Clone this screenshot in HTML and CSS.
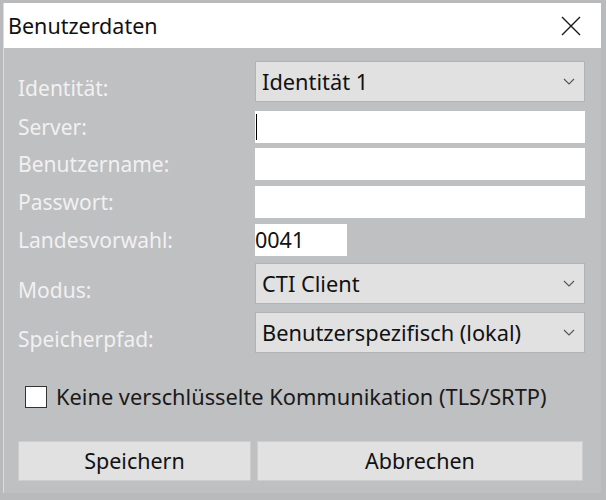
FILE: index.html
```html
<!DOCTYPE html>
<html lang="de">
<head>
<meta charset="utf-8">
<title>Benutzerdaten</title>
<link rel="stylesheet" href="styles.css">
</head>
<body>
<div class="window">
  <div class="titlebar">
    <span class="title">Benutzerdaten</span>
    <span class="close">
      <svg width="20" height="20" viewBox="0 0 20 20"><path d="M1 1 L19 19 M19 1 L1 19" stroke="#1a1a1a" stroke-width="1.4" fill="none"/></svg>
    </span>
  </div>
  <div class="content">
    <div class="row row-select first">
      <label class="label">Identität:</label>
      <div class="select"><span>Identität 1</span><svg class="chev" width="12" height="7" viewBox="0 0 12 7"><path d="M1 1 L6 6 L11 1" stroke="#555" stroke-width="1.1" fill="none"/></svg></div>
    </div>
    <div class="row row-input r-server">
      <label class="label">Server:</label>
      <div class="input wide"><span class="caret"></span></div>
    </div>
    <div class="row row-input r-user">
      <label class="label">Benutzername:</label>
      <div class="input wide"></div>
    </div>
    <div class="row row-input r-pass">
      <label class="label">Passwort:</label>
      <div class="input wide"></div>
    </div>
    <div class="row row-input r-land">
      <label class="label">Landesvorwahl:</label>
      <div class="input short">0041</div>
    </div>
    <div class="row row-select r-mode">
      <label class="label">Modus:</label>
      <div class="select"><span>CTI Client</span><svg class="chev" width="12" height="7" viewBox="0 0 12 7"><path d="M1 1 L6 6 L11 1" stroke="#555" stroke-width="1.1" fill="none"/></svg></div>
    </div>
    <div class="row row-select r-path">
      <label class="label">Speicherpfad:</label>
      <div class="select"><span>Benutzerspezifisch (lokal)</span><svg class="chev" width="12" height="7" viewBox="0 0 12 7"><path d="M1 1 L6 6 L11 1" stroke="#555" stroke-width="1.1" fill="none"/></svg></div>
    </div>
    <div class="check-row">
      <span class="checkbox"></span>
      <span class="check-text">Keine verschlüsselte Kommunikation (TLS/SRTP)</span>
    </div>
    <div class="buttons">
      <div class="btn btn-save">Speichern</div>
      <div class="btn btn-cancel">Abbrechen</div>
    </div>
  </div>
</div>
</body>
</html>
```
FILE: styles.css
```css
html, body {
  margin: 0;
  padding: 0;
}
body {
  width: 606px;
  height: 500px;
  background: #b9babc;
  font-family: "Noto Sans", "Open Sans", sans-serif;
  overflow: hidden;
}
.window {
  margin: 3px 5px 0 3px;
  height: 490px;
  border-left: 1px solid #cfe0e8;
  display: flex;
  flex-direction: column;
  background: #bfc0c2;
}
.titlebar {
  height: 45px;
  background: #ffffff;
  display: flex;
  align-items: center;
  justify-content: space-between;
  padding: 0 20px 0 4px;
  flex: none;
}
.title {
  font-size: 21.5px;
  line-height: 26px;
  color: #111;
}
.close {
  display: flex;
  align-items: center;
}
.content {
  flex: 1;
  padding: 13px 16px 0 14px;
  display: flex;
  flex-direction: column;
}
.row {
  display: flex;
  align-items: center;
}
.label {
  width: 237px;
  flex: none;
  color: #f1f1f1;
  font-size: 21px;
  line-height: 26px;
}
.row-select .label {
  align-self: flex-end;
  line-height: 28px;
}
.select {
  flex: 1;
  height: 39px;
  background: #e1e1e1;
  border: 1px solid #b3b3b3;
  display: flex;
  align-items: center;
  justify-content: space-between;
  padding: 0 9px 0 6px;
  font-size: 21.8px;
  line-height: 26px;
  color: #111;
}
.chev {
  flex: none;
}
.input {
  height: 32px;
  background: #ffffff;
  box-sizing: border-box;
  font-size: 21.5px;
  line-height: 26px;
  color: #111;
  display: flex;
  align-items: center;
}
.wide {
  flex: 1;
}
.short {
  width: 92px;
}
.caret {
  width: 1px;
  height: 26px;
  background: #000;
  margin-left: 1px;
}
.r-server { margin-top: 9px; }
.r-user { margin-top: 5px; }
.r-pass { margin-top: 6px; }
.r-land { margin-top: 6px; }
.r-mode { margin-top: 7px; }
.r-path { margin-top: 8px; }
.check-row {
  display: flex;
  align-items: center;
  margin-top: 31px;
  padding-left: 7px;
  height: 26px;
}
.checkbox {
  width: 20px;
  height: 20px;
  background: #fff;
  border: 1px solid #333;
  flex: none;
}
.check-text {
  margin-left: 9px;
  font-size: 21.8px;
  line-height: 26px;
  color: #1a1a1a;
}
.buttons {
  display: flex;
  gap: 6px;
  margin-top: 31px;
}
.btn {
  height: 38px;
  background: #e1e1e1;
  border: 1px solid #cdcdcd;
  display: flex;
  align-items: center;
  justify-content: center;
  font-size: 21.5px;
  line-height: 26px;
  color: #111;
}
.btn-save { width: 231px; }
.btn-cancel { flex: 1; margin-right: 2px; }
```
